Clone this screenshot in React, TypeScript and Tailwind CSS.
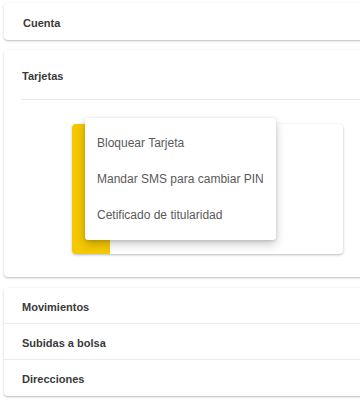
const ROWS = ["Movimientos", "Subidas a bolsa", "Direcciones"];
const MENU = ["Bloquear Tarjeta", "Mandar SMS para cambiar PIN", "Cetificado de titularidad"];

const panel =
  "w-[372px] rounded-[4px] bg-white shadow-[0_1px_3px_rgba(0,0,0,0.18),0_1px_1px_rgba(0,0,0,0.1)]";

export default function App() {
  return (
    <div
      className="h-[408px] w-[360px] overflow-hidden bg-white pl-1 pt-[3px]"
      style={{ fontFamily: '"Liberation Sans", Arial, sans-serif' }}
    >
      {/* Cuenta */}
      <div className={`${panel} flex h-[37px] items-center pl-[19px] pt-[3px]`}>
        <span className="text-[11px] font-bold text-[#3a3a3a]">Cuenta</span>
      </div>

      {/* Tarjetas */}
      <div className={`${panel} mt-[10px] pb-[23px]`}>
        <div className="ml-[18px] flex h-[50px] items-center border-b border-[#e6e6e6] pt-[3px]">
          <span className="text-[11px] font-bold text-[#3a3a3a]">Tarjetas</span>
        </div>
        <div className="relative ml-[68px] mt-[24px] w-[271px]">
          <div className="flex h-[130px] overflow-hidden rounded-[4px] bg-white shadow-[0_1px_3px_rgba(0,0,0,0.2),0_1px_2px_rgba(0,0,0,0.08)]">
            <div className="h-full w-[38px] bg-[#f5c800]" />
          </div>
          {/* Menu overlay */}
          <div className="absolute left-[13px] top-[-6px] w-[191px] rounded-[3px] bg-white py-[7px] shadow-[0_4px_10px_rgba(0,0,0,0.22),0_1px_3px_rgba(0,0,0,0.12)]">
            {MENU.map((m) => (
              <div key={m} className="flex h-9 items-center px-3 text-[12px] text-[#5a5a5a]">
                {m}
              </div>
            ))}
          </div>
        </div>
      </div>

      {/* List */}
      <div className={`${panel} mt-[11px]`}>
        {ROWS.map((r, i) => (
          <div
            key={r}
            className={`flex h-9 items-center pl-[18px] pt-[3px] ${i < ROWS.length - 1 ? "border-b border-[#ececec]" : ""}`}
          >
            <span className="text-[11px] font-bold text-[#3a3a3a]">{r}</span>
          </div>
        ))}
      </div>
    </div>
  );
}
